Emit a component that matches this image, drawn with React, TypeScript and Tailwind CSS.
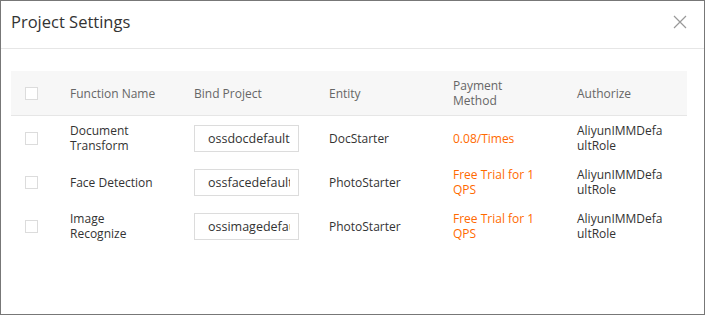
import { useState } from "react";

type Row = {
  name: string;
  project: string;
  entity: string;
  payment: string;
  role: string;
};

const rows: Row[] = [
  { name: "Document Transform", project: "ossdocdefault", entity: "DocStarter", payment: "0.08/Times", role: "AliyunIMMDefaultRole" },
  { name: "Face Detection", project: "ossfacedefault", entity: "PhotoStarter", payment: "Free Trial for 1 QPS", role: "AliyunIMMDefaultRole" },
  { name: "Image Recognize", project: "ossimagedefault", entity: "PhotoStarter", payment: "Free Trial for 1 QPS", role: "AliyunIMMDefaultRole" },
];

const Checkbox = () => (
  <span className="block w-[13px] h-[13px] border border-[#dcdcdc] bg-white" />
);

const App = () => {
  const [values, setValues] = useState(rows.map((r) => r.project));

  return (
    <div
      className="w-[705px] h-[315px] bg-white border border-[#777777] flex flex-col text-[12px] leading-[15px] text-[#333333]"
      style={{ fontFamily: '"Open Sans", "Noto Sans", Arial, sans-serif' }}
    >
      {/* Header */}
      <div className="h-[48px] shrink-0 border-b border-[#e6e6e6] flex items-start justify-between pl-[10px] pr-[17px] pt-[10px]">
        <h1 className="text-[16.5px] leading-[22px] text-[#333333]">Project Settings</h1>
        <button className="mt-[4px] text-[#999999]" aria-label="close">
          <svg width="14" height="14" viewBox="0 0 14 14" fill="none" stroke="currentColor" strokeWidth="1.2">
            <path d="M1 1 L13 13 M13 1 L1 13" />
          </svg>
        </button>
      </div>

      {/* Body */}
      <div className="pt-[22px] px-[10px]">
        <div className="w-[676px]">
          {/* Table head */}
          <div className="flex h-[45px] items-center bg-[#f7f7f7] border-b border-[#e6e6e6] text-[#666666]">
            <div className="w-[45px] pl-[14px]">
              <Checkbox />
            </div>
            <div className="w-[124px] pl-[14px]">Function Name</div>
            <div className="w-[135px] pl-[14px]">Bind Project</div>
            <div className="w-[124px] pl-[14px]">Entity</div>
            <div className="w-[124px] pl-[14px] pr-[50px]">Payment Method</div>
            <div className="w-[124px] pl-[14px]">Authorize</div>
          </div>

          {rows.map((r, i) => (
            <div key={r.name} className="flex h-[44px] items-center">
              <div className="w-[45px] pl-[14px]">
                <Checkbox />
              </div>
              <div className="w-[124px] pl-[14px] pr-[20px]">{r.name}</div>
              <div className="w-[135px] pl-[14px]">
                <input
                  value={values[i]}
                  onChange={(e) => setValues(values.map((v, j) => (j === i ? e.target.value : v)))}
                  className="w-[105px] h-[27px] border border-[#dcdcdc] pl-[13px] pr-[8px] text-[12.5px] text-[#333333] outline-none"
                />
              </div>
              <div className="w-[124px] pl-[14px]">{r.entity}</div>
              <div className="w-[124px] pl-[14px] pr-[10px] text-[#ff6a00]">{r.payment}</div>
              <div className="w-[124px] pl-[14px] pr-[20px] break-all">{r.role}</div>
            </div>
          ))}
        </div>
      </div>
    </div>
  );
};

export default App;
